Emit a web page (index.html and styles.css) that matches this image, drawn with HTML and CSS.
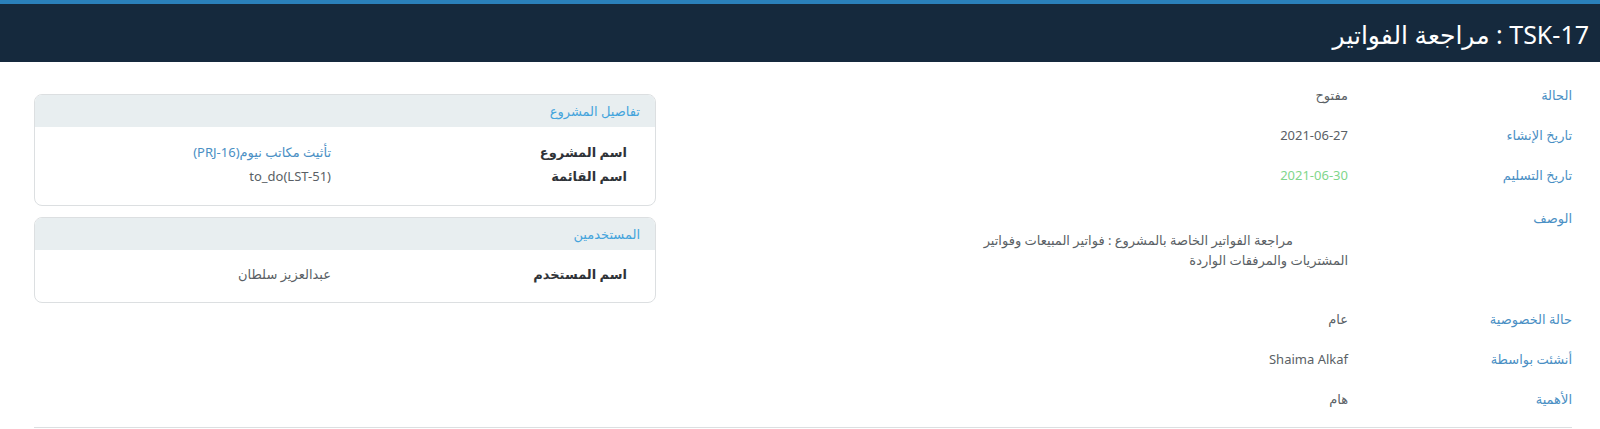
FILE: index.html
```html
<!DOCTYPE html>
<html lang="ar" dir="rtl">
<head>
  <meta charset="UTF-8">
  <meta name="viewport" content="width=device-width, initial-scale=1.0">
  <title>TSK-17 : مراجعة الفواتير</title>
  <link rel="stylesheet" href="styles.css">
</head>
<body>
  <header class="page-head">
    <h1>TSK-17 : مراجعة الفواتير</h1>
  </header>

  <main class="task">
    <section class="info">
      <div class="row">
        <div class="label">الحالة</div>
        <div class="value">مفتوح</div>
      </div>
      <div class="row">
        <div class="label">تاريخ الإنشاء</div>
        <div class="value">2021-06-27</div>
      </div>
      <div class="row">
        <div class="label">تاريخ التسليم</div>
        <div class="value due">2021-06-30</div>
      </div>
      <div class="row desc">
        <div class="label">الوصف</div>
        <div class="value">
          <p>مراجعة الفواتير الخاصة بالمشروع : فواتير المبيعات وفواتير<br>المشتريات والمرفقات الواردة</p>
        </div>
      </div>
      <div class="row">
        <div class="label">حالة الخصوصية</div>
        <div class="value">عام</div>
      </div>
      <div class="row">
        <div class="label">أنشئت بواسطة</div>
        <div class="value">Shaima Alkaf</div>
      </div>
      <div class="row">
        <div class="label">الأهمية</div>
        <div class="value">هام</div>
      </div>
    </section>

    <aside class="side">
      <div class="card">
        <div class="card-head">تفاصيل المشروع</div>
        <div class="card-body">
          <div class="card-row">
            <span class="card-label">اسم المشروع</span>
            <a class="card-link" href="#">تأثيث مكاتب نيوم(PRJ-16)</a>
          </div>
          <div class="card-row">
            <span class="card-label">اسم القائمة</span>
            <span class="card-value">to_do(LST-51)</span>
          </div>
        </div>
      </div>
      <div class="card">
        <div class="card-head">المستخدمين</div>
        <div class="card-body users">
          <div class="card-row">
            <span class="card-label">اسم المستخدم</span>
            <span class="card-value">عبدالعزيز سلطان</span>
          </div>
        </div>
      </div>
    </aside>
  </main>
</body>
</html>
```

FILE: styles.css
```css
:root {
  --head: #15293d;
  --head-line: #2a80bb;
  --label: #4a8fc4;
  --soft-blue: #44a4dc;
  --text: #5a5f65;
  --dark: #2f3338;
  --green: #7fd68b;
  --line: #dcdfe1;
}
* {
  margin: 0;
  padding: 0;
  box-sizing: border-box;
}
body {
  font-family: "Noto Sans", "DejaVu Sans", sans-serif;
  font-size: 13px;
  color: var(--text);
  background: #fff;
}
.page-head {
  background: var(--head);
  border-top: 4px solid var(--head-line);
  height: 62px;
  display: flex;
  align-items: center;
  padding: 0 11px;
}
.page-head h1 {
  color: #fff;
  font-size: 25px;
  font-weight: normal;
  line-height: 1;
  padding-top: 2px;
}
.task {
  display: flex;
  justify-content: space-between;
  margin: 0 28px 0 34px;
  padding: 13px 0 8px;
  border-bottom: 1px solid var(--line);
}
.info {
  flex: 1;
}
.row {
  display: flex;
  padding: 10px 0;
  line-height: 20px;
}
.label {
  width: 224px;
  color: var(--label);
  font-size: 13px;
}
.value {
  color: var(--text);
}
.due {
  color: var(--green);
}
.desc .label {
  padding-top: 3px;
}
.desc p {
  margin: 25px 0 19px;
  text-indent: 55px;
  text-align: right;
}
.side {
  width: 622px;
  display: flex;
  flex-direction: column;
  gap: 11px;
  padding-top: 19px;
}
.card {
  border: 1px solid var(--line);
  border-radius: 8px;
  overflow: hidden;
}
.card-head {
  background: #e8eef0;
  color: var(--soft-blue);
  height: 32px;
  line-height: 32px;
  padding: 0 15px;
}
.card-body {
  padding: 13px 28px 17px;
}
.card-body.users {
  padding: 12px 28px 16px;
}
.card-row {
  display: flex;
  line-height: 24px;
}
.card-label {
  width: 296px;
  font-weight: bold;
  color: var(--dark);
}
.card-link {
  color: var(--label);
  text-decoration: none;
}
.card-value {
  color: var(--text);
}
```
